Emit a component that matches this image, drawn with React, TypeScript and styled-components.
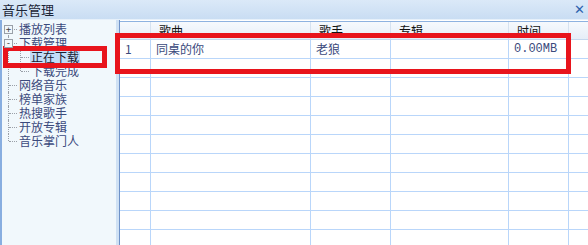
import React from "react";
import styled, { createGlobalStyle } from "styled-components";

const Global = createGlobalStyle`
  html, body { margin: 0; padding: 0; background: #ffffff; }
  body { font-family: "Noto Sans CJK SC", "Liberation Sans", sans-serif; }
`;

const Window = styled.div`
  position: relative;
  width: 588px;
  height: 245px;
  display: flex;
  flex-direction: column;
  overflow: hidden;
  background: #ffffff;
`;

const TitleBar = styled.div`
  height: 19px;
  flex: none;
  display: flex;
  align-items: center;
  justify-content: space-between;
  padding: 0 3px 0 2px;
  background: linear-gradient(#dbe9f8, #c9ddf3);
  border-bottom: 1px solid #e6f0fa;
  color: #1a2436;
  font-size: 13px;
  line-height: 19px;
`;

const Close = styled.span`
  font-family: "DejaVu Sans", sans-serif;
  font-weight: bold;
  color: #2c62ae;
  font-size: 13px;
`;

const Body = styled.div`
  flex: 1;
  display: flex;
  min-height: 0;
`;

const Sidebar = styled.div`
  width: 114px;
  flex: none;
  background: #f1f8fc;
  border-left: 2px solid #88aee0;
  border-right: 3px solid #cfe1f4;
  padding-top: 2px;
  font-size: 12px;
  color: #3b4a7c;
`;

const TreeItem = styled.div<{ $level: number }>`
  height: 14px;
  display: flex;
  align-items: center;
  position: relative;
  padding-left: ${(p) => (p.$level === 0 ? 16 : 28)}px;
  line-height: 14px;
  white-space: nowrap;
`;

const VLine = styled.span<{ $x: number; $top: number; $bottom: number }>`
  position: absolute;
  left: ${(p) => p.$x}px;
  top: ${(p) => p.$top}px;
  bottom: ${(p) => p.$bottom}px;
  border-left: 1px dotted #9aa0a8;
`;

const HLine = styled.span<{ $x: number; $w: number }>`
  position: absolute;
  left: ${(p) => p.$x}px;
  width: ${(p) => p.$w}px;
  top: 7px;
  border-top: 1px dotted #9aa0a8;
`;

const Expander = styled.span`
  position: absolute;
  left: 2px;
  top: 3px;
  width: 7px;
  height: 7px;
  border: 1px solid #9aa0a8;
  background: #f1f8fc;
  font-size: 9px;
  line-height: 7px;
  text-align: center;
  color: #444;
  font-family: "DejaVu Sans Mono", monospace;
  z-index: 1;
`;

const Label = styled.span<{ $selected?: boolean }>`
  display: inline-block;
  height: 14px;
  line-height: 14px;
  font-size: 12px;
  padding: 0 1px;
  background: ${(p) => (p.$selected ? "#c2dcf7" : "transparent")};
  color: ${(p) => (p.$selected ? "#1a2030" : "inherit")};
`;

const Grid = styled.div`
  flex: 1;
  border-left: 1px solid #6e92c8;
  display: flex;
  flex-direction: column;
  padding-top: 1px;
`;

const cols = [31, 160, 80, 118, 60, 20];

const HeaderRow = styled.div`
  height: 17px;
  flex: none;
  display: flex;
  border-top: 1px solid #8eb2e0;
  background: linear-gradient(#f6f9fd, #e6eef8);
  border-bottom: 1px solid #c5d8ee;
  font-size: 12px;
  color: #111;
`;

const HeaderCell = styled.div<{ $w: number }>`
  width: ${(p) => p.$w}px;
  flex: none;
  box-sizing: border-box;
  border-right: 1px solid #d6e2f0;
  padding: 1px 0 0 8px;
  line-height: 16px;
  &:last-child { flex: 1; border-right: none; }
`;

const Row = styled.div`
  height: 19px;
  flex: none;
  display: flex;
  box-sizing: border-box;
  border-bottom: 1px solid #b9d6fa;
  font-size: 12px;
  color: #3b4a7c;
`;

const Cell = styled.div<{ $w: number; $mono?: boolean }>`
  width: ${(p) => p.$w}px;
  flex: none;
  box-sizing: border-box;
  border-right: 1px solid #b9d6fa;
  padding-left: 5px;
  line-height: 18px;
  font-family: ${(p) =>
    p.$mono ? '"Liberation Mono", monospace' : "inherit"};
  &:last-child { flex: 1; border-right: none; }
`;

const Mark = styled.div<{ $x: number; $y: number; $w: number; $h: number }>`
  position: absolute;
  left: ${(p) => p.$x}px;
  top: ${(p) => p.$y}px;
  width: ${(p) => p.$w}px;
  height: ${(p) => p.$h}px;
  box-sizing: border-box;
  border: 5px solid #e8141c;
  pointer-events: none;
`;

const tree = [
  { label: "播放列表", level: 0, exp: "+" },
  { label: "下载管理", level: 0, exp: "-" },
  { label: "正在下载", level: 1, selected: true },
  { label: "下载完成", level: 1 },
  { label: "网络音乐", level: 0 },
  { label: "榜单家族", level: 0 },
  { label: "热搜歌手", level: 0 },
  { label: "开放专辑", level: 0 },
  { label: "音乐掌门人", level: 0 },
];

const headers = ["", "歌曲", "歌手", "专辑", "时间", ""];

export default function App() {
  const rows = Array.from({ length: 11 }, (_, i) => i);
  return (
    <>
      <Global />
      <Window>
        <TitleBar>
          <span>音乐管理</span>
          <Close>✕</Close>
        </TitleBar>
        <Body>
          <Sidebar>
            {tree.map((t, i) => (
              <TreeItem key={t.label} $level={t.level}>
                {t.level === 0 && (
                  <>
                    <VLine
                      $x={6}
                      $top={i === 0 ? 7 : 0}
                      $bottom={i === tree.length - 1 ? 7 : 0}
                    />
                    <HLine $x={7} $w={8} />
                  </>
                )}
                {t.level === 1 && (
                  <>
                    <VLine $x={6} $top={0} $bottom={0} />
                    <VLine $x={18} $top={0} $bottom={i === 3 ? 7 : 0} />
                    <HLine $x={19} $w={8} />
                  </>
                )}
                {t.exp && <Expander>{t.exp}</Expander>}
                <Label $selected={t.selected}>{t.label}</Label>
              </TreeItem>
            ))}
          </Sidebar>
          <Grid>
            <HeaderRow>
              {headers.map((h, i) => (
                <HeaderCell key={i} $w={cols[i]}>
                  {h}
                </HeaderCell>
              ))}
            </HeaderRow>
            {rows.map((r) => (
              <Row key={r}>
                {cols.map((w, c) => {
                  let v = "";
                  if (r === 0) {
                    v = ["1", "同桌的你", "老狼", "", "0.00MB", ""][c];
                  }
                  return (
                    <Cell key={c} $w={w} $mono={c === 4}>
                      {v}
                    </Cell>
                  );
                })}
              </Row>
            ))}
          </Grid>
        </Body>
        <Mark $x={3} $y={46} $w={104} $h={22} />
        <Mark $x={115} $y={33} $w={456} $h={41} />
      </Window>
    </>
  );
}
